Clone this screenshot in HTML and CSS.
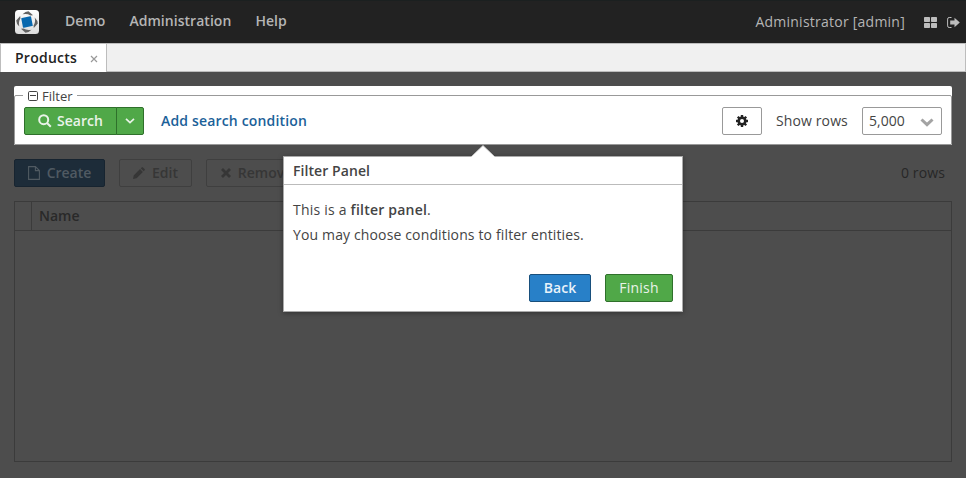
FILE: index.html
```html
<!DOCTYPE html>
<html lang="en">
<head>
<meta charset="utf-8">
<title>Products</title>
<link rel="stylesheet" href="styles.css">
</head>
<body>
<header class="topbar">
  <svg class="logo" width="24" height="24" viewBox="0 0 24 24">
    <defs>
      <linearGradient id="lg" x1="0" y1="0" x2="0" y2="1"><stop offset="0" stop-color="#fff"/><stop offset="1" stop-color="#dcdcdc"/></linearGradient>
      <path id="w" d="M7.500 4.300Q10.500 1.200 13.500 1.200L18 5.200L15.500 5.400Q12 3.200 7.500 4.300Z"/>
    </defs>
    <rect width="24" height="24" rx="3.5" fill="url(#lg)"/>
    <g fill="#636363">
      <use href="#w"/><use href="#w" transform="rotate(90 12 12)"/><use href="#w" transform="rotate(180 12 12)"/><use href="#w" transform="rotate(270 12 12)"/>
    </g>
    <rect x="7" y="7" width="10" height="10" rx=".8" fill="#0868ae" transform="rotate(-11 12 12)"/>
  </svg>
  <nav class="menu"><span>Demo</span><span>Administration</span><span>Help</span></nav>
  <span class="user">Administrator [admin]</span>
  <svg class="grid-icon" width="13" height="11" viewBox="0 0 13 11" fill="#bdbdbd"><rect width="6" height="5" rx=".7"/><rect x="7" width="6" height="5" rx=".7"/><rect y="6" width="6" height="5" rx=".7"/><rect x="7" y="6" width="6" height="5" rx=".7"/></svg>
  <svg class="exit-icon" width="13" height="11" viewBox="0 0 13 11"><path d="M4.500 .5H2.200Q.6 .5 .6 2.100V8.900Q.6 10.500 2.200 10.500H4.500" fill="none" stroke="#bdbdbd"/><path d="M3.200 3.600H7.500V.7L12.800 5.500L7.500 10.300V7.400H3.200Z" fill="#bdbdbd"/></svg>
</header>
<div class="tabs"><div class="tab"><span>Products</span><svg width="8" height="8" viewBox="0 0 8 8"><path d="M1 1L7 7M7 1L1 7" stroke="#999" stroke-width="1.200"/></svg></div></div>
<main class="screen">
  <section class="filter">
    <div class="legend">
      <svg width="10" height="10" viewBox="0 0 10 10" fill="none" stroke="#444"><rect x=".5" y=".5" width="9" height="9" rx="1.200"/><path d="M2 4.500H8"/></svg>
      <span>Filter</span>
    </div>
    <div class="filter-box">
      <div class="btn green search"><svg width="14" height="14" viewBox="0 0 14 14" fill="none" stroke="#e9f3e8" stroke-width="2"><circle cx="5.700" cy="5.700" r="4.500"/><path d="M9 9L12.800 12.800"/></svg><span>Search</span></div>
      <div class="btn green drop"><svg width="10" height="6" viewBox="0 0 10 6"><path d="M1 .8L5 4.600L9 .8" fill="none" stroke="#e9f3e8" stroke-width="1.700"/></svg></div>
      <span class="add">Add search condition</span>
      <div class="btn plain gear"><svg width="12" height="12" viewBox="-6 -6 12 12"><g fill="#222"><rect x="-1.200" y="-6" width="2.400" height="12"/><rect x="-1.200" y="-6" width="2.400" height="12" transform="rotate(45)"/><rect x="-1.200" y="-6" width="2.400" height="12" transform="rotate(90)"/><rect x="-1.200" y="-6" width="2.400" height="12" transform="rotate(135)"/><circle r="4.600"/></g><circle r="2" fill="#fff"/></svg></div>
      <span class="show">Show rows</span>
      <div class="select"><span>5,000</span><svg width="14" height="9" viewBox="0 0 14 9"><path d="M1.500 1.500L7 6.700L12.500 1.500" fill="none" stroke="#a3a3a3" stroke-width="3"/></svg></div>
    </div>
  </section>
  <div class="actions">
    <div class="btn create"><svg width="12" height="14" viewBox="0 0 12 14" fill="none" stroke="#505a62" stroke-width="1.100"><path d="M.6 .6H7.400L11.400 4.600V13.400H.6ZM7.400 .6V4.600H11.400"/></svg><span>Create</span></div>
    <div class="btn dim edit"><svg width="12" height="12" viewBox="0 0 12 12" fill="#363636"><path d="M0 12L.7 8.400L7 2.100L9.900 5L3.600 11.300ZM7.800 1.300L8.700 .4Q9.300 -.2 9.900 .4L11.600 2.100Q12.200 2.700 11.600 3.300L10.700 4.200Z"/></svg><span>Edit</span></div>
    <div class="btn dim remove"><svg width="10" height="10" viewBox="0 0 10 10"><path d="M1 1L9 9M9 1L1 9" stroke="#363636" stroke-width="2.800"/></svg><span>Remove</span></div>
    <span class="count">0 rows</span>
  </div>
  <div class="table"><div class="thead"><div class="mark"></div><div class="name">Name</div></div></div>
</main>
<aside class="popup">
  <svg class="arrow" width="24" height="12" viewBox="0 0 24 12"><path d="M0 12L12 .5L24 12Z" fill="#fff"/><path d="M.5 11.500L12 .5L23.500 11.500" fill="none" stroke="#ccc" stroke-width=".8"/></svg>
  <h2>Filter Panel</h2>
  <div class="copy"><div class="intro">This is a <b>filter panel</b>.</div><div>You may choose conditions to filter entities.</div></div>
  <div class="buttons"><div class="btn blue">Back</div><div class="btn green finish">Finish</div></div>
</aside>
</body>
</html>
```
FILE: styles.css
```css
* { box-sizing: border-box; }
body { margin: 0; width: 966px; height: 478px; overflow: hidden; position: relative; background: #4d4d4d; color: #444; font: 14px/20px "Open Sans", sans-serif; }
svg { display: block; flex: none; }
span { white-space: nowrap; }
.topbar { height: 43px; background: #222; border-top: 1px solid #1b2020; display: flex; align-items: center; padding: 0 6px 0 15px; color: #b5b5b5; }
.menu { display: flex; gap: 24px; margin-left: 26px; margin-top: -2px; font-weight: 600; letter-spacing: .04px; }
.user { margin-left: auto; letter-spacing: .24px; }
.grid-icon { margin-left: 19px; }
.exit-icon { margin-left: 10px; }
.tabs { height: 29px; background: #f0f0f0; border: 1px solid #bdbdbd; display: flex; }
.tab { width: 106px; height: 28px; background: #fff; border-right: 1px solid #bdbdbd; display: flex; align-items: center; padding-left: 14px; color: #222; font-weight: 600; letter-spacing: .25px; }
.tab svg { margin: 2px 0 0 13px; }
.screen { padding: 14px; }
.filter { height: 59px; background: #fff; border-radius: 2px 2px 0 0; padding-top: 9px; position: relative; }
.legend { position: absolute; left: 9px; top: 1px; height: 18px; padding: 0 4px 0 5px; background: #fff; display: flex; align-items: center; gap: 4px; font-size: 13px; }
.filter-box { height: 50px; border: 1px solid #999; border-radius: 2px 2px 0 0; display: flex; align-items: flex-start; padding: 11px 9px 0; line-height: 28px; }
.btn { height: 28px; border: 1px solid; border-radius: 2px; display: flex; align-items: center; justify-content: center; font-weight: 600; line-height: 26px; }
.green { background: #50a848; border-color: #2f702b; color: #e9f3e8; }
.search { width: 93px; gap: 5px; border-radius: 2px 0 0 2px; }
.drop { width: 28px; margin-left: -1px; border-radius: 0 2px 2px 0; }
.add { margin-left: 17px; color: #1b6199; font-weight: 600; letter-spacing: .17px; }
.plain { background: #fff; border-color: #999; }
.gear { width: 40px; margin-left: auto; }
.show { width: 72px; margin: 0 14px; letter-spacing: .12px; }
.select { width: 80px; height: 28px; border: 1px solid #999; border-radius: 2px; padding: 0 7px 0 6px; display: flex; align-items: center; justify-content: space-between; }
.select svg { margin-top: 2px; }
.actions { display: flex; margin-top: 14px; gap: 14px; line-height: 28px; }
.create { width: 91px; gap: 7px; background: #1d2c39; border-color: #172430; color: #505a62; }
.dim { border-color: #3f3f3f; color: #363636; }
.edit { width: 73px; gap: 7px; }
.remove { width: 101px; gap: 7px; }
.count { margin-left: auto; margin-right: 7px; color: #272727; letter-spacing: .12px; }
.table { margin-top: 14px; height: 261px; border: 1px solid #3b3b3b; }
.thead { height: 29px; border-bottom: 1px solid #3b3b3b; display: flex; line-height: 28px; color: #292929; font-weight: 600; }
.mark { width: 17px; border-right: 1px solid #3b3b3b; }
.name { padding-left: 7px; }
.popup { position: absolute; left: 283px; top: 156px; width: 400px; height: 156px; background: #fff; border: 1px solid #aaa; box-shadow: 0 1px 5px rgba(0,0,0,.35); }
.arrow { position: absolute; left: 187px; top: -12px; }
.popup h2 { margin: 0; height: 28px; border-bottom: 1px solid #bbb; padding-left: 9px; font: 600 14px/28px "Open Sans", sans-serif; letter-spacing: .08px; }
.copy { padding: 12px 9px 0; line-height: 25px; letter-spacing: .14px; }
.intro { letter-spacing: .22px; }
.copy b { font-weight: 600; }
.buttons { display: flex; justify-content: flex-end; gap: 14px; padding: 27px 9px 0; }
.blue { width: 62px; background: #2880c8; border-color: #184f7c; color: #e9f2fa; }
.finish { width: 68px; font-weight: 400; letter-spacing: .2px; }
```
